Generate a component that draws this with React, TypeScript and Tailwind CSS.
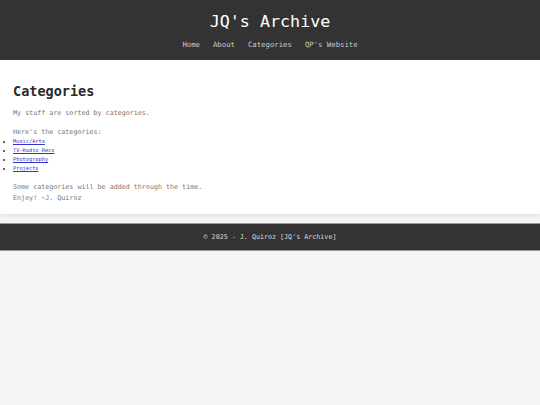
export default function App() {
  const mono = { fontFamily: '"DejaVu Sans Mono", "Liberation Mono", monospace' };
  return (
    <div className="min-h-[405px] bg-[#f5f5f5]" style={mono}>
      <header className="h-[60px] bg-[#333333] flex flex-col items-center">
        <h1 className="mt-[10px] text-[16.7px] leading-[22px] text-white font-normal">JQ's Archive</h1>
        <nav className="mt-[8px] flex gap-[13px] text-[7.3px] leading-[10px] text-[#cccccc]">
          <a>Home</a>
          <a>About</a>
          <a>Categories</a>
          <a>QP's Website</a>
        </nav>
      </header>
      <main className="bg-white h-[154px] px-[13px] pt-[22px] shadow-[0_2px_4px_rgba(0,0,0,0.08)] text-[#777777]">
        <h2 className="text-[13.5px] leading-[18px] font-bold text-[#2a2a2a]">Categories</h2>
        <p className="mt-[8px] text-[6.7px] leading-[10px]">My stuff are sorted by categories.</p>
        <p className="mt-[9px] text-[6.7px] leading-[10px]">Here's the categories:</p>
        <ul className="list-disc list-outside text-[5.3px] leading-[9px] text-[#3333cc]">
          <li className="marker:text-[#333333]"><a className="underline">Music/Arts</a></li>
          <li className="marker:text-[#333333]"><a className="underline">TV-Radio Recs</a></li>
          <li className="marker:text-[#333333]"><a className="underline">Photography</a></li>
          <li className="marker:text-[#333333]"><a className="underline">Projects</a></li>
        </ul>
        <p className="mt-[9px] text-[6.7px] leading-[11px]">Some categories will be added through the time.</p>
        <p className="text-[6.7px] leading-[11px]">Enjoy! ~J. Quiroz</p>
      </main>
      <footer className="mt-[9px] h-[28px] bg-[#333333] border-t border-b border-[#999999] flex items-center justify-center text-[6.7px] text-[#dddddd]">
        © 2025 - J. Quiroz [JQ's Archive]
      </footer>
    </div>
  );
}
